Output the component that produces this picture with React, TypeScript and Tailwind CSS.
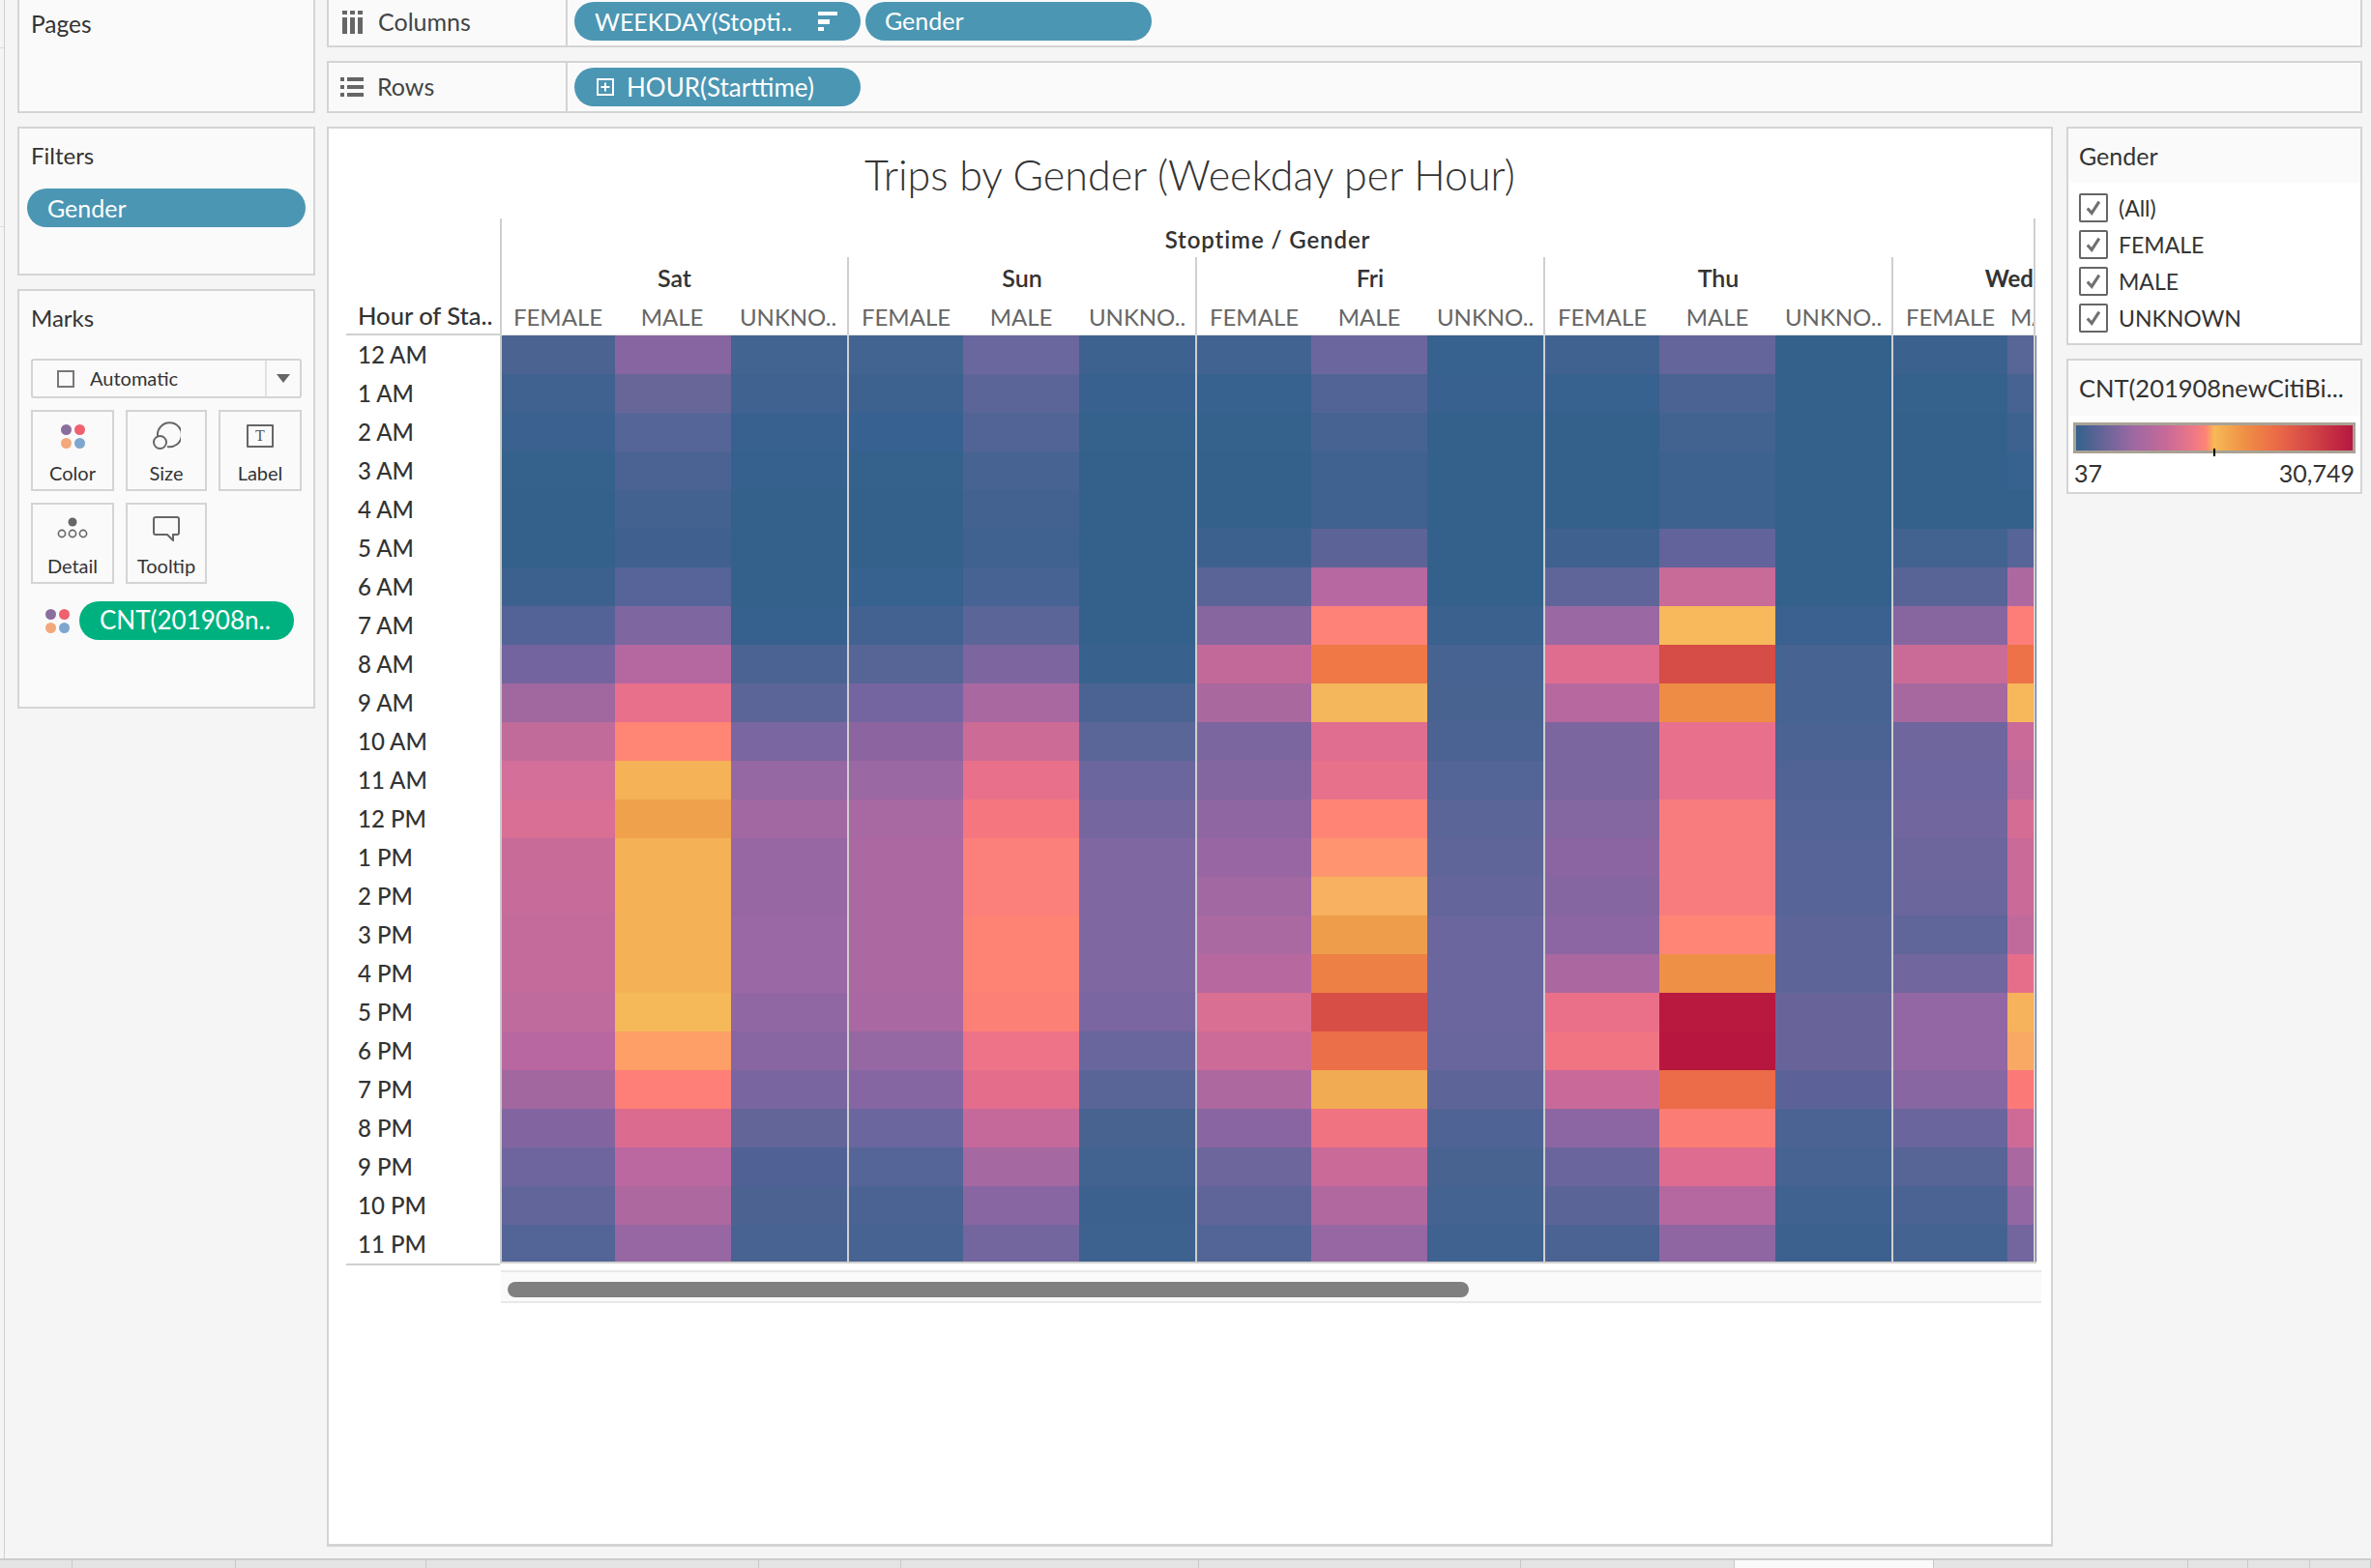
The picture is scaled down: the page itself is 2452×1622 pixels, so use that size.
import React from "react";

const B = "#34618c";
type Col = string[];
const D: Record<string, Col> = {
  satF: ["#4a6391","#3f6290","#3b6190","#35618d","#34618c","#34618c","#3d618f","#546397","#73649f","#a0689f","#c06b9a","#d36f99","#d96f94","#c96b99","#c66b9a","#c46b9b","#c46b9b","#bf6b9e","#b967a0","#a3679f","#8265a0","#6e659f","#616599","#536496"],
  satM: ["#8665a0","#686699","#566597","#4a6392","#436290","#406190","#56649a","#7e67a0","#b568a0","#e9708b","#ff8574","#f5b256","#efa14c","#f5b155","#f5b155","#f5b155","#f5b155","#f5b95a","#fd9f66","#fe7f78","#db6c90","#ba689f","#ac689f","#9767a3"],
  satU: ["#426490","#3f6291","#38618f","#36618e",B,B,B,"#36608d","#4a6392","#5b6598","#7a66a0","#9567a3","#a268a2","#9667a3","#9667a3","#9a68a5","#9a68a5","#9167a3","#8866a2","#7966a0","#636598","#506295","#4c6392","#486391"],
  sunF: ["#426490","#3e6290","#376190","#35618d",B,B,"#37618f","#436291","#566496","#7465a0","#8c65a0","#9a68a3","#a868a1","#ac68a1","#ab68a1","#ab68a1","#ab68a1","#a968a1","#9567a3","#8566a2","#6b669e","#556597","#4b6392","#476391"],
  sunM: ["#6a669e","#5c6598","#526495","#476392","#436290","#3f6290","#476393","#5c6598","#7d66a0","#aa68a0","#cc6b96","#e9708b","#f5767f","#fb7f7a","#fb7f7a","#fe8374","#fe8374","#fd8077","#ee7388","#e46d8b","#c5699a","#a568a0","#8866a2","#73669f"],
  sunU: ["#3d628f","#39618f","#35618d",B,B,B,B,B,"#38618e","#4b6392","#5a6598","#6b669d","#76669f","#7f67a2","#7f67a2","#7f67a2","#7f67a2","#7a66a0","#68669d","#596597","#496391","#42628f","#3d618e","#3e628f"],
  friF: ["#416391","#37618f","#35618d",B,B,"#3d618f","#5a6497","#87669f","#c2699a","#a9699f","#7c669f","#8366a0","#8f66a2","#9867a3","#a168a2","#ab69a1","#b6689f","#d96f93","#cc6b98","#ad68a0","#8966a2","#6c669d","#5f6499","#526596"],
  friM: ["#6b679e","#526496","#466392","#406290","#406290","#5b6397","#b768a0","#ff8278","#ef7846","#f5b75b","#df6e90","#e7718b","#ff8476","#ff9570","#f8b160","#ee9e4b","#ec8045","#d74e47","#eb6f48","#f1ab53","#ef7380","#c96a99","#b0689f","#9767a3"],
  friU: ["#37618f","#38618f",B,B,B,B,B,"#3b618f","#466391","#496391","#4a6392","#536496","#5b6598","#5f6599","#63659b","#6b669d","#6b669d","#6b669d","#68669d","#5d6598","#506395","#496391","#446391","#406290"],
  thuF: ["#3f6290","#37618e",B,B,B,"#3f6190","#5f6599","#9a68a3","#df6d8f","#b6689f","#7b669f","#7c669f","#8466a1","#8a65a1","#8666a1","#8c66a2","#aa67a0","#ea7089","#f07482","#c9699a","#8c66a2","#6a669d","#5a6497","#4a6392"],
  thuM: ["#64659a","#4b6393","#426390","#3e6290","#3e6290","#62639a","#c96b99","#f7b95c","#d64c46","#ee8c45","#e8708c","#e8708c","#f87c7e","#f87c7e","#f87c7e","#ff8577","#ee9147","#b9183f","#b7163e","#ec6b48","#fa7c74","#dd6c90","#b4689f","#8f66a2"],
  thuU: [B,B,B,B,B,B,B,"#3a618f","#466391","#476391","#4a6392","#516395","#556496","#566497","#566497","#5d6598","#5d6598","#68649a","#68649a","#5c6297","#4b6392","#466391","#3f6290","#3c618f"],
  wedF: ["#3b618e","#35618d",B,B,B,"#426290","#586496","#8766a0","#ca6b97","#a768a0","#6e669d","#6e669e","#72669f","#6c669d","#6b669c","#60659a","#71669e","#9367a3","#9367a3","#8766a1","#6a669d","#576496","#4a6392","#456391"],
  wedM: ["#576597","#466391","#3e6290","#37618e",B,"#566497","#ae68a0","#fd7d78","#ed7248","#f7b85b","#c96a99","#c16a9b","#d46c94","#ca6a98","#ca6a98","#c06a9b","#e66e8b","#f6b35c","#f9a964","#fb7a78","#cf6a97","#a968a0","#9367a3","#73669f"],
};

const HOURS = ["12 AM","1 AM","2 AM","3 AM","4 AM","5 AM","6 AM","7 AM","8 AM","9 AM","10 AM","11 AM","12 PM","1 PM","2 PM","3 PM","4 PM","5 PM","6 PM","7 PM","8 PM","9 PM","10 PM","11 PM"];
const TABS = [75,169,197,344,147,308,333,221,206,263,62,64,63];

function HeatCol({ colors, w }: { colors: Col; w: string }) {
  return (
    <div className={`flex flex-col shrink-0 ${w}`}>
      {colors.map((c, i) => (
        <div key={i} className="h-[40px] shrink-0" style={{ background: c }} />
      ))}
    </div>
  );
}

function Dots({ className }: { className?: string }) {
  return (
    <svg viewBox="0 0 25 25" className={className}>
      <circle cx="5.5" cy="5.5" r="5.5" fill="#8a6f9e" />
      <circle cx="19.5" cy="5.5" r="5.5" fill="#f0606f" />
      <circle cx="5.5" cy="19.5" r="5.5" fill="#f2a87a" />
      <circle cx="19.5" cy="19.5" r="5.5" fill="#7fa6cf" />
    </svg>
  );
}

function MarkBtn({ label, w, children }: { label: string; w: string; children: React.ReactNode }) {
  return (
    <div className={`${w} h-[84px] border-2 border-[#d4d4d4] flex flex-col items-center shrink-0`}>
      <div className="h-[34px] mt-[8px] flex items-center justify-center">{children}</div>
      <div className="text-[20px] leading-[26px] mt-[8px] text-[#333]">{label}</div>
    </div>
  );
}

function Check() {
  return (
    <div className="w-[30px] h-[30px] border-2 border-[#666] rounded-[2px] flex items-center justify-center shrink-0">
      <svg viewBox="0 0 20 20" className="w-[18px] h-[18px]">
        <path d="M3 10.5 L8 16 L16.5 3" fill="none" stroke="#707070" strokeWidth="3.4" />
      </svg>
    </div>
  );
}

function GenderHead({ text, w }: { text: string; w: string }) {
  return <div className={`${w} shrink-0 text-center text-[24px] text-[#666] whitespace-nowrap overflow-hidden`}>{text}</div>;
}

function DayHead({ day, sep, w, f }: { day: string; sep: boolean; w: string; f: string }) {
  return (
    <div className={`${w} shrink-0 ${sep ? "border-l-2 border-[#cfcfcf]" : ""} flex flex-col`}>
      <div className="h-[42px] flex items-center justify-center text-[25px] font-semibold text-[#333] pt-[1px]">{day}</div>
      <div className="h-[39px] flex items-center">
        <GenderHead text="FEMALE" w={f} />
        <GenderHead text="MALE" w="w-[120px]" />
        <GenderHead text="UNKNO.." w="w-[120px]" />
      </div>
    </div>
  );
}

export default function App() {
  return (
    <div className="w-[2452px] h-[1622px] overflow-hidden flex flex-col bg-[#f5f5f5] font-['Lato',sans-serif] text-[#333]">
      <div className="flex h-[1612px] shrink-0">
        {/* left strip */}
        <div className="w-[5px] shrink-0 border-r border-[#cfcfcf] flex flex-col">
          <div className="h-[50px] border-b border-[#dcdcdc]" />
          <div className="h-[185px] border-b border-[#dcdcdc]" />
        </div>

        {/* sidebar */}
        <div className="w-[308px] ml-[13px] shrink-0 flex flex-col gap-[14px]">
          <div className="h-[117px] bg-[#fafafa] border-2 border-t-0 border-[#d4d4d4] px-[12px] pt-[9px] text-[24.5px] leading-[32px]">Pages</div>
          <div className="h-[154px] bg-[#fafafa] border-2 border-[#d4d4d4]">
            <div className="text-[24px] leading-[32px] pl-[12px] pt-[12px]">Filters</div>
            <div className="mt-[18px] mx-[8px] h-[40px] rounded-[20px] bg-[#4b96b3] text-white text-[25px] leading-[40px] pl-[21px]">Gender</div>
          </div>
          <div className="h-[434px] bg-[#fafafa] border-2 border-[#d4d4d4] px-[12px]">
            <div className="text-[24px] leading-[32px] pt-[12px]">Marks</div>
            <div className="mt-[26px] h-[41px] border-2 border-[#d4d4d4] rounded-[3px] flex items-center">
              <div className="w-[18px] h-[18px] border-2 border-[#777] ml-[25px] shrink-0" />
              <div className="text-[20px] ml-[16px] flex-1 pb-[2px]">Automatic</div>
              <div className="w-[36px] h-full border-l-2 border-[#e2e2e2] flex items-center justify-center">
                <svg viewBox="0 0 14 9" className="w-[14px] h-[9px]"><path d="M0 0H14L7 9Z" fill="#666" /></svg>
              </div>
            </div>
            <div className="flex gap-[12px] mt-[12px]">
              <MarkBtn label="Color" w="w-[86px]"><Dots className="w-[25px] h-[25px]" /></MarkBtn>
              <MarkBtn label="Size" w="w-[84px]">
                <svg viewBox="0 0 30 30" className="w-[30px] h-[30px]" fill="none" stroke="#666" strokeWidth="2">
                  <path d="M6 15 A 12.5 12.5 0 1 1 16 26" />
                  <circle cx="8.5" cy="21.5" r="6.5" />
                </svg>
              </MarkBtn>
              <MarkBtn label="Label" w="w-[86px]">
                <div className="w-[28px] h-[24px] border-2 border-[#666] rounded-[1px] flex items-center justify-center font-['Liberation_Serif',serif] text-[16px] leading-none text-[#555]">T</div>
              </MarkBtn>
            </div>
            <div className="flex gap-[12px] mt-[12px]">
              <MarkBtn label="Detail" w="w-[86px]">
                <svg viewBox="0 0 32 24" className="w-[32px] h-[24px]" fill="none" stroke="#666" strokeWidth="1.6">
                  <circle cx="16" cy="5" r="4.5" fill="#666" stroke="none" />
                  <circle cx="5" cy="17" r="3.6" /><circle cx="16" cy="17" r="3.6" /><circle cx="27" cy="17" r="3.6" />
                </svg>
              </MarkBtn>
              <MarkBtn label="Tooltip" w="w-[84px]">
                <svg viewBox="0 0 28 26" className="w-[28px] h-[26px]" fill="none" stroke="#666" strokeWidth="2">
                  <path d="M3 1H25Q27 1 27 3V17Q27 19 25 19H21V25L15 19H3Q1 19 1 17V3Q1 1 3 1Z" />
                </svg>
              </MarkBtn>
            </div>
            <div className="flex items-center mt-[18px] pl-[15px]">
              <Dots className="w-[25px] h-[25px] shrink-0" />
              <div className="ml-[10px] w-[222px] h-[40px] rounded-[20px] bg-[#00b180] text-white text-[26px] leading-[39px] pl-[21px] whitespace-nowrap">CNT(201908n..</div>
            </div>
          </div>
        </div>

        {/* center + right */}
        <div className="ml-[12px] w-[2105px] shrink-0 flex flex-col gap-[14px]">
          <div className="h-[49px] bg-[#fafafa] border-2 border-t-0 border-[#d4d4d4] flex">
            <div className="w-[247px] shrink-0 border-r-2 border-[#d4d4d4] flex items-center pb-[2px] pl-[14px] text-[25px] text-[#444]">
              <svg viewBox="0 0 22 24" className="w-[22px] h-[24px] mr-[15px]" fill="#666">
                <rect x="0" y="0" width="5" height="4" /><rect x="8" y="0" width="5" height="4" /><rect x="16" y="0" width="5" height="4" />
                <rect x="0" y="7" width="5" height="17" /><rect x="8" y="7" width="5" height="17" /><rect x="16" y="7" width="5" height="17" />
              </svg>
              Columns
            </div>
            <div className="flex items-start pt-[2px] pl-[7px] gap-[5px]">
              <div className="w-[296px] h-[40px] rounded-[20px] bg-[#4b96b3] text-white text-[25px] leading-[40px] pl-[21px] flex items-center whitespace-nowrap">
                <span className="w-[231px] shrink-0 pb-[1px]">WEEKDAY(Stopti..</span>
                <svg viewBox="0 0 20 20" className="w-[20px] h-[20px]" fill="#fff">
                  <rect x="0" y="0" width="20" height="4" /><rect x="0" y="8" width="12" height="5" /><rect x="0" y="16" width="6" height="4" />
                </svg>
              </div>
              <div className="w-[296px] h-[40px] rounded-[20px] bg-[#4b96b3] text-white text-[25px] leading-[39px] pl-[20px]">Gender</div>
            </div>
          </div>
          <div className="h-[54px] bg-[#fafafa] border-2 border-[#d4d4d4] flex">
            <div className="w-[247px] shrink-0 border-r-2 border-[#d4d4d4] flex items-center pl-[12px] text-[25px] text-[#444]">
              <svg viewBox="0 0 24 20" className="w-[24px] h-[20px] mr-[14px]" fill="#666">
                <rect x="0" y="0" width="4" height="4" /><rect x="7" y="0" width="17" height="4" />
                <rect x="0" y="8" width="4" height="4" /><rect x="7" y="8" width="17" height="4" />
                <rect x="0" y="16" width="4" height="4" /><rect x="7" y="16" width="17" height="4" />
              </svg>
              Rows
            </div>
            <div className="pt-[5px] pl-[7px]">
              <div className="w-[296px] h-[40px] rounded-[20px] bg-[#4b96b3] text-white text-[26px] flex items-center pl-[23px] whitespace-nowrap">
                <svg viewBox="0 0 18 18" className="w-[18px] h-[18px] mr-[13px]" fill="none" stroke="#fff" strokeWidth="2">
                  <rect x="1" y="1" width="16" height="16" /><path d="M9 4.5V13.5M4.5 9H13.5" />
                </svg>
                HOUR(Starttime)
              </div>
            </div>
          </div>

          <div className="h-[1469px] flex gap-[14px]">
            {/* chart */}
            <div className="w-[1785px] shrink-0 bg-white border-2 border-[#d4d4d4] border-b-[3px] flex flex-col">
              <div className="h-[93px] flex items-center justify-center pt-[3px] text-[43px] font-light text-[#333] whitespace-nowrap">Trips by Gender (Weekday per Hour)</div>
              <div className="flex ml-[18px]">
                <div className="w-[159px] shrink-0 flex flex-col">
                  <div className="h-[121px] border-b-2 border-[#cfcfcf] flex items-end pl-[12px] pb-[3px]">
                    <span className="text-[25.5px] font-medium text-[#333] whitespace-nowrap leading-[32px]">Hour of Sta..</span>
                  </div>
                  <div className="border-b-2 border-[#cfcfcf] pl-[12px]">
                    {HOURS.map((h) => (
                      <div key={h} className="h-[40px] text-[24px] font-medium leading-[40px] text-[#333]">{h}</div>
                    ))}
                  </div>
                </div>
                <div className="flex flex-col">
                  <div className="w-[1588px] border-l-2 border-r-2 border-[#cfcfcf] h-[121px] border-b border-b-[#e0e0e0] flex flex-col overflow-hidden">
                    <div className="h-[40px] shrink-0 flex items-center justify-center text-[24px] font-semibold tracking-[0.9px] text-[#333] pt-[3px]">Stoptime / Gender</div>
                    <div className="flex h-[81px]">
                      <DayHead day="Sat" sep={false} w="w-[357px]" f="w-[116px]" />
                      <DayHead day="Sun" sep w="w-[360px]" f="w-[118px]" />
                      <DayHead day="Fri" sep w="w-[360px]" f="w-[118px]" />
                      <DayHead day="Thu" sep w="w-[360px]" f="w-[118px]" />
                      <div className="w-[147px] shrink-0 border-l-2 border-[#cfcfcf] flex flex-col">
                        <div className="h-[42px] flex items-center justify-end text-[24px] font-bold text-[#333] pt-[1px]">Wed</div>
                        <div className="h-[39px] flex items-center overflow-hidden">
                          <GenderHead text="FEMALE" w="w-[118px]" />
                          <div className="w-[27px] pl-[3px] overflow-hidden shrink-0 text-[24px] text-[#666]">MALE</div>
                        </div>
                      </div>
                    </div>
                  </div>
                  <div className="h-[960px] border-b-2 border-[#cfcfcf] overflow-hidden flex items-start">
                    <div className="flex h-[958px] border-l-2 border-[#c9c9c9] overflow-hidden">
                      <HeatCol colors={D.satF} w="w-[117px]" />
                      <HeatCol colors={D.satM} w="w-[120px]" />
                      <HeatCol colors={D.satU} w="w-[120px]" />
                      <div className="w-[2px] bg-[#cfcfcf] shrink-0" />
                      <HeatCol colors={D.sunF} w="w-[118px]" />
                      <HeatCol colors={D.sunM} w="w-[120px]" />
                      <HeatCol colors={D.sunU} w="w-[120px]" />
                      <div className="w-[2px] bg-[#cfcfcf] shrink-0" />
                      <HeatCol colors={D.friF} w="w-[118px]" />
                      <HeatCol colors={D.friM} w="w-[120px]" />
                      <HeatCol colors={D.friU} w="w-[120px]" />
                      <div className="w-[2px] bg-[#cfcfcf] shrink-0" />
                      <HeatCol colors={D.thuF} w="w-[118px]" />
                      <HeatCol colors={D.thuM} w="w-[120px]" />
                      <HeatCol colors={D.thuU} w="w-[120px]" />
                      <div className="w-[2px] bg-[#cfcfcf] shrink-0" />
                      <HeatCol colors={D.wedF} w="w-[118px]" />
                      <HeatCol colors={D.wedM} w="w-[27px]" />
                      <div className="w-[2px] bg-[#cfcfcf] shrink-0" />
                      <div className="w-px bg-[#5f6a9e] shrink-0" />
                    </div>
                  </div>
                </div>
              </div>
              <div className="ml-[178px] mt-[5px] w-[1593px] h-[34px] bg-[#fafafa] border-y-2 border-[#e8e8e8] pl-[7px] pt-[10px]">
                <div className="w-[994px] h-[16px] rounded-[8px] bg-[#808080]" />
              </div>
            </div>

            {/* right */}
            <div className="w-[306px] shrink-0 flex flex-col gap-[14px]">
              <div className="h-[226px] border-2 border-[#d4d4d4] bg-white">
                <div className="h-[56px] bg-[#fafafa] pl-[11px] text-[25px] leading-[56px]">Gender</div>
                <div className="flex flex-col gap-[8px] pl-[11px] pt-[11px]">
                  {["(All)", "FEMALE", "MALE", "UNKNOWN"].map((t) => (
                    <div key={t} className="flex items-center h-[30px]">
                      <Check />
                      <span className="ml-[11px] text-[23px] text-[#333]">{t}</span>
                    </div>
                  ))}
                </div>
              </div>
              <div className="h-[140px] border-2 border-[#d4d4d4] bg-white">
                <div className="h-[57px] bg-[#fafafa] pl-[11px] text-[25.5px] leading-[57px] whitespace-nowrap overflow-hidden">CNT(201908newCitiBi...</div>
                <div className="relative mx-[5px] mt-[7px] h-[32px] border-[3px] border-[#a8a295] bg-[linear-gradient(90deg,#34618c_0%,#9a68a3_20%,#c96a98_33%,#ef7985_43%,#ff8574_47%,#f7b955_50%,#ee8c44_62%,#ec6c48_72%,#d94f47_82%,#b5173f_100%)]">
                  <div className="absolute left-[142px] top-[24px] w-[2px] h-[8px] bg-black" />
                </div>
                <div className="flex justify-between px-[6px] mt-[5px] text-[25px] leading-[30px] text-[#333]">
                  <span>37</span><span>30,749</span>
                </div>
              </div>
            </div>
          </div>
        </div>
      </div>

      {/* bottom tabs */}
      <div className="h-[10px] shrink-0 flex bg-[#e4e4e4] border-t-2 border-[#cccccc]">
        {TABS.map((w, i) => (
          <div key={i} className={i === 8 ? "bg-[#fafafa] border-r border-[#c8c8c8]" : "border-r border-[#c8c8c8]"} style={{ width: w }} />
        ))}
      </div>
    </div>
  );
}
